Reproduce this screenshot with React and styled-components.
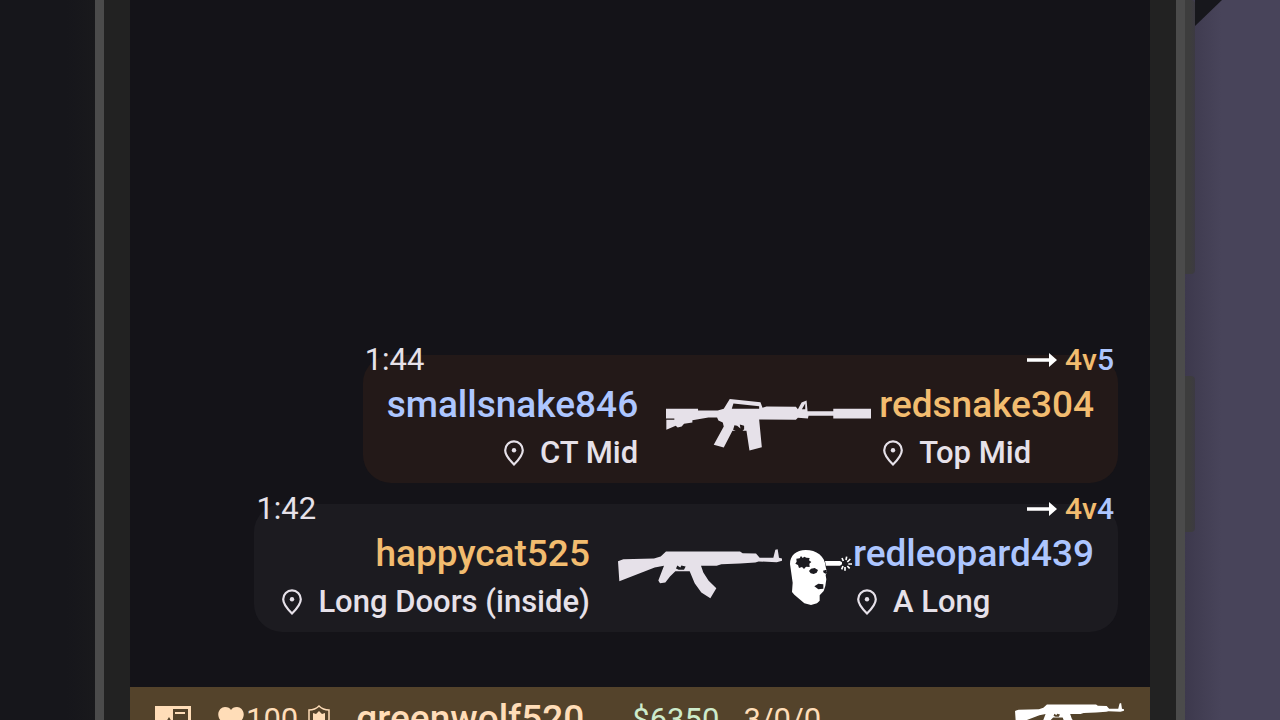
import React from 'react';
import styled, { createGlobalStyle } from 'styled-components';

const GlobalStyle = createGlobalStyle`
  * {
    box-sizing: border-box;
  }

  body {
    margin: 0;
    overflow: hidden;
    background-color: #17171c;
    color: #e6e1e9;
    font-family: Roboto, 'Liberation Sans', sans-serif;
  }
`;

const teamColors = {
  ct: '#adc6ff',
  t: '#f2bc6f',
};

const Stage = styled.div`
  display: flex;
  height: 100vh;
  overflow: hidden;
`;

const LeftSide = styled.div`
  flex: 0 0 95px;
  background: linear-gradient(to right, #16161b 70%, #19191c);
`;

const Phone = styled.main`
  display: flex;
  flex: 1;
  min-width: 0;
  height: calc(100vh + 31px);
  border: solid #4b4b4b;
  border-width: 0 9px;
  padding: 0 26px;
  background-color: #222;
`;

const Screen = styled.div`
  display: flex;
  flex: 1;
  flex-direction: column;
  min-width: 0;
  background-color: #141318;
`;

const RightSide = styled.div`
  display: flex;
  flex: 0 0 95px;
  background: linear-gradient(to right, #3d394d, #48445a 36px);
`;

const Keys = styled.div`
  display: flex;
  flex-direction: column;
  gap: 102px;
  width: 10px;
`;

const Key = styled.div`
  height: ${(props) => (props.$long ? 274 : 156)}px;
  border-radius: 0 4px 4px 0;
  background: linear-gradient(to right, #3d3d3d 50%, #3c3a42);
`;

const Wedge = styled.svg`
  width: 27px;
  height: 26px;
  fill: #17171c;
`;

const Feed = styled.section`
  display: flex;
  flex: 1;
  flex-direction: column;
  align-items: flex-end;
  justify-content: flex-end;
  gap: 21px;
  padding: 0 32px 55px;
`;

const KillCard = styled.article`
  height: 128px;
  border-radius: 28px;
  background-color: ${(props) => (props.$own ? '#231918' : '#1c1b20')};
`;

const KillHeader = styled.header`
  display: flex;
  align-items: center;
  justify-content: space-between;
  height: 34px;
  margin-top: -12px;
  padding: 0 4px 0 2px;
  font-size: 31px;
  line-height: 32px;
`;

const Score = styled.div`
  display: flex;
  align-items: center;
  font-size: 30px;
  font-weight: 500;

  svg {
    margin-right: 8px;
  }
`;

const TeamText = styled.span`
  color: ${(props) => teamColors[props.$team]};
`;

const KillBody = styled.div`
  display: flex;
  align-items: center;
  padding: 4px 24px 0;
`;

const PlayerInfo = styled.div`
  display: flex;
  flex-direction: column;
  align-items: ${(props) => (props.$end ? 'flex-end' : 'flex-start')};
`;

const PlayerName = styled.div`
  color: ${(props) => teamColors[props.$team]};
  font-size: 37px;
  font-weight: 500;
  line-height: 48px;
`;

const Place = styled.div`
  display: flex;
  align-items: center;
  gap: 12px;
  font-size: 31px;
  font-weight: 500;
  line-height: 48px;
`;

const Weapons = styled.div`
  display: flex;
  align-items: center;
  gap: 8px;
  padding: 0 ${(props) => (props.$tight ? 1 : 8)}px 8px 28px;
`;

const StatusBar = styled.footer`
  display: flex;
  align-items: center;
  height: 64px;
  padding: 0 26px 0 24px;
  background-color: #54432b;
  color: #ffddb8;
  font-size: 31px;
`;

const Vitals = styled.div`
  display: flex;
  align-items: center;
  gap: 2px;
  margin-left: 27px;

  svg:last-child {
    margin-left: 8px;
  }
`;

const OwnName = styled.div`
  margin-left: 26px;
  font-size: 37px;
  line-height: 48px;
  font-weight: 500;
`;

const Money = styled.div`
  margin-left: 48px;
  color: #cdebcb;
`;

const Stats = styled.div`
  flex: 1;
  margin-left: 24px;
`;

const PinIcon = () => (
  <svg width="28" height="28" viewBox="0 0 28 28" fill="none" aria-hidden="true">
    <path
      d="M14 25.500C9 20.500 5.200 16 5.200 11.200a8.800 8.800 0 0 1 17.600 0c0 4.800-3.800 9.300-8.800 14.300Z"
      stroke="currentColor"
      strokeWidth="2.200"
    />
    <circle cx="14" cy="11.200" r="2.200" fill="currentColor" />
  </svg>
);

const ArrowIcon = () => (
  <svg width="30" height="16" viewBox="0 0 30 16" fill="#fff" aria-hidden="true">
    <path d="M0 6.200h22V1l8 7-8 7V9.800H0z" />
  </svg>
);

const M4Icon = () => (
  <svg width="205" height="52" viewBox="49 178 614 155" fill="currentColor" role="img" aria-label="M4A1-S">
    <path
      fillRule="evenodd"
      d="M49 207H145V212H204L222 207 240 178 332 187 338 204 350 200 438 201 444 208 455 188 470 182 473 214H550V207H663V236H550V228H476L474 236 444 234 438 240 328 239 336 322 299 332 290 273H248L222 323 192 315 222 260 219 248 206 242 202 233H176L128 241V248L103 252 96 260 84 263 78 258 50 270V240H74V236H49ZM251 191L246 207H328V199ZM456 208H466V191ZM254 256L250 270 258 273H278L283 268V258L270 254 272 266 262 258Z"
    />
  </svg>
);

const AkIcon = ({ width = 164, height = 50, color = 'currentColor' }) => (
  <svg width={width} height={height} viewBox="50 58 492 149" fill={color} role="img" aria-label="AK-47">
    <path
      fillRule="evenodd"
      d="M50 94L66 88 158 86 178 80 194 65H416L424 70 464 71 475 84H516L522 60 529 58 533 84 542 86V93L526 97 472 95 462 98 416 101 360 103 346 108H299L306 128 322 153 345 175 327 205 300 188 280 160 265 124H222L206 140 192 158 176 160 171 152 188 108 160 113 54 154ZM228 107L224 116 232 120H248L253 110 240 107 237 113Z"
    />
  </svg>
);

const HeadshotIcon = () => (
  <svg width="62" height="61" viewBox="567 44 186 183" fill="#fff" role="img" aria-label="Headshot">
    <path
      fillRule="evenodd"
      d="M567 104C567 78 586 62 614 62 646 62 672 80 674 112L677 126 674 138 676 150 673 170 668 185 656 198V214L648 222 630 227 610 222 580 196 573 188 575 160ZM600 80L596 87 586 88 587 97 583 103 591 107 594 116 603 113 609 119 615 112 626 113 625 103 631 98 624 93 626 86 616 85 610 82 605 86ZM624 125L630 118 641 116 651 122 647 130 638 134 629 132ZM666 124L676 121V134L668 130ZM640 171L652 163 667 165V178L652 180Z"
    />
    <path d="M672 95h45l6 4v6l-6 4h-42z" />
    <path
      d="M727 95l-4-9M735 92l2-10M739 98l9-9M742 104h11M739 110l7 7M732 113v11M726 110l-4 10"
      fill="none"
      stroke="#fff"
      strokeWidth="5"
    />
  </svg>
);

const CardIcon = () => (
  <svg width="37" height="26" viewBox="0 0 37 26" aria-hidden="true">
    <path
      fill="currentColor"
      fillRule="evenodd"
      d="M1 0h36v26H1zM19 3v18h15V3zM15 11l3 5h-6z"
    />
    <path d="M21 7h10" stroke="currentColor" strokeWidth="2" />
  </svg>
);

const HeartIcon = () => (
  <svg width="26" height="24" viewBox="0 0 26 24" fill="currentColor" aria-hidden="true">
    <path d="M13 24 3 14C-3 7 2 0 7 0c3 0 5 1 6 3 1-2 3-3 6-3 5 0 10 7 4 14z" />
  </svg>
);

const ShieldIcon = () => (
  <svg width="22" height="28" viewBox="0 0 22 28" aria-hidden="true">
    <path
      d="M11 1c3 3 6 4 10 4v9c0 5-4 9-10 12C5 23 1 19 1 14V5c4 0 7-1 10-4Z"
      fill="none"
      stroke="currentColor"
      strokeWidth="1.500"
    />
    <path d="M5 8l3 1 3-3 3 3 3-1v7c0 3-2 5-6 7-4-2-6-4-6-7z" fill="currentColor" />
  </svg>
);

const weaponIcons = {
  m4: M4Icon,
  ak: AkIcon,
};

const kills = [
  {
    time: '1:44',
    own: true,
    killer: { name: 'smallsnake846', team: 'ct', place: 'CT Mid' },
    victim: { name: 'redsnake304', team: 't', place: 'Top Mid' },
    weapon: 'm4',
    headshot: false,
    ctAlive: 5,
    tAlive: 4,
  },
  {
    time: '1:42',
    own: false,
    killer: { name: 'happycat525', team: 't', place: 'Long Doors (inside)' },
    victim: { name: 'redleopard439', team: 'ct', place: 'A Long' },
    weapon: 'ak',
    headshot: true,
    ctAlive: 4,
    tAlive: 4,
  },
];

const Player = ({ player, end }) => (
  <PlayerInfo $end={end}>
    <PlayerName $team={player.team}>{player.name}</PlayerName>
    <Place>
      <PinIcon />
      {player.place}
    </Place>
  </PlayerInfo>
);

const Kill = ({ kill }) => {
  const Weapon = weaponIcons[kill.weapon];
  return (
    <KillCard $own={kill.own}>
      <KillHeader>
        <time>{kill.time}</time>
        <Score>
          <ArrowIcon />
          <TeamText $team="t">{kill.tAlive}v</TeamText>
          <TeamText $team="ct">{kill.ctAlive}</TeamText>
        </Score>
      </KillHeader>
      <KillBody>
        <Player player={kill.killer} end />
        <Weapons $tight={kill.headshot}>
          <Weapon />
          {kill.headshot && <HeadshotIcon />}
        </Weapons>
        <Player player={kill.victim} />
      </KillBody>
    </KillCard>
  );
};

const App = () => (
  <>
    <GlobalStyle />
    <Stage>
      <LeftSide />
      <Phone>
        <Screen>
          <Feed>
            {kills.map((kill) => (
              <Kill key={kill.time} kill={kill} />
            ))}
          </Feed>
          <StatusBar>
            <CardIcon />
            <Vitals>
              <HeartIcon />
              100
              <ShieldIcon />
            </Vitals>
            <OwnName>greenwolf520</OwnName>
            <Money>$6350</Money>
            <Stats>3/0/0</Stats>
            <AkIcon width={109} height={33} color="#fff" />
          </StatusBar>
        </Screen>
      </Phone>
      <RightSide>
        <Keys>
          <Key $long />
          <Key />
        </Keys>
        <Wedge viewBox="0 0 27 26" aria-hidden="true">
          <path d="M0 0h27L0 26z" />
        </Wedge>
      </RightSide>
    </Stage>
  </>
);

export default App;
